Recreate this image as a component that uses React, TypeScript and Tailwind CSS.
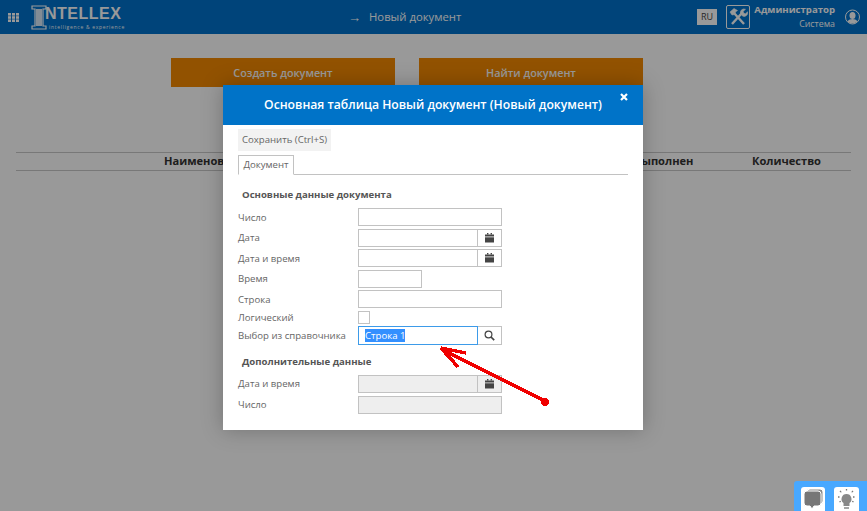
const font = "font-['Open_Sans',sans-serif]";

function Logo() {
  return (
    <div className="flex items-center relative w-[92px] h-[26px]">
      <svg width="16" height="25" viewBox="0 0 16 25" className="shrink-0">
        <path d="M1 1h14v3h-3v17h3v3H1v-3h3V4H1z" fill="none" stroke="#fff" strokeWidth="1.2" />
        <rect x="5" y="4" width="6" height="17" fill="#fff" opacity="0.85" />
      </svg>
      <span className="font-['Liberation_Sans',sans-serif] font-bold text-[16px] leading-none tracking-[0.5px] -ml-[2px] -mt-[6px] text-white">NTELLEX</span>
      <span className="absolute left-[18px] top-[21px] text-white text-[5px] leading-none tracking-[0.7px] whitespace-nowrap">intelligence &amp; experience</span>
    </div>
  );
}

function GridIcon() {
  return (
    <svg width="11" height="9" viewBox="0 0 11 9" fill="#fff">
      {[0, 3.2, 6.4].map((y) =>
        [0, 4, 8].map((x) => <rect key={`${x}-${y}`} x={x} y={y} width="3" height="2.6" />)
      )}
    </svg>
  );
}

function ToolsIcon() {
  return (
    <svg width="20" height="20" viewBox="0 0 20 20" fill="none" stroke="#fff">
      <path d="M4 17 L14 6" strokeWidth="2.4" />
      <path d="M12.5 6.5a3.6 3.6 0 0 1 5-4.2l-2.4 2.2 0.7 1.8 1.8 0.4 1.9-1.9a3.6 3.6 0 0 1-5 4.3z" fill="#fff" strokeWidth="0.6" />
      <path d="M16 17 L6 6" strokeWidth="2.4" />
      <path d="M2 5 L6 1.5 L9.5 3.5 L7.5 5 L6.5 7.5 L4 8z" fill="#fff" strokeWidth="0.6" />
    </svg>
  );
}

function UserIcon() {
  return (
    <svg width="15" height="16" viewBox="0 0 15 16">
      <circle cx="7.5" cy="8" r="7" fill="none" stroke="#fff" strokeWidth="1" />
      <ellipse cx="7.5" cy="6.5" rx="3" ry="3.6" fill="#fff" />
      <path d="M2.6 12.5c1-2 3-2.6 4.9-2.6s3.9.6 4.9 2.6a7 7 0 0 1-9.8 0z" fill="#fff" />
    </svg>
  );
}

function CalIcon() {
  return (
    <svg width="9" height="10" viewBox="0 0 9 10" fill="#444">
      <rect x="2" y="0" width="1.4" height="1.5" />
      <rect x="5.6" y="0" width="1.4" height="1.5" />
      <rect x="0" y="1.5" width="9" height="2" />
      <rect x="0" y="4.3" width="9" height="5.2" />
    </svg>
  );
}

function SearchIcon() {
  return (
    <svg width="11" height="11" viewBox="0 0 11 11" fill="none" stroke="#444">
      <circle cx="4.5" cy="4.5" r="3.4" strokeWidth="1.2" />
      <path d="M7 7 L10.2 10.2" strokeWidth="1.7" />
    </svg>
  );
}

function Field({ w = "w-[144px]", icon, disabled, focused, value }: { w?: string; icon?: "cal" | "search"; disabled?: boolean; focused?: boolean; value?: string }) {
  const bg = disabled ? "bg-[#eeeeee]" : "bg-white";
  return (
    <div className={`flex ${w} h-full`}>
      <div className={`flex-1 min-w-0 flex items-center border ${focused ? "border-[#3d9be9]" : "border-[#c2c2c2]"} ${bg} px-[6px]`}>
        {value && <span className="bg-[#3390ff] text-white text-[9.6px] leading-[13px]">{value}</span>}
      </div>
      {icon && (
        <div className={`w-[24px] flex items-center justify-center border border-l-0 border-[#c2c2c2] ${bg}`}>
          {icon === "cal" ? <CalIcon /> : <SearchIcon />}
        </div>
      )}
    </div>
  );
}

function Row({ label, h = "h-[18px]", mb = "mb-[2.5px]", children }: { label: string; h?: string; mb?: string; children: React.ReactNode }) {
  return (
    <div className={`flex items-center ${h} ${mb}`}>
      <label className="w-[120px] shrink-0 pt-[1px] text-[9.6px] text-[#666] leading-none whitespace-nowrap">{label}</label>
      {children}
    </div>
  );
}

export default function App() {
  return (
    <div className={`${font} relative w-[867px] h-[511px] overflow-hidden bg-white`}>
      <header className="h-[34px] bg-[#0072cc] flex items-center text-white">
        <span className="ml-[8px] flex"><GridIcon /></span>
        <div className="ml-[12px]"><Logo /></div>
        <div className="ml-[225px] flex items-center gap-[8px] text-[11.3px]">
          <span className="text-[13px] leading-none">→</span>
          <span>Новый документ</span>
        </div>
        <div className="ml-auto flex items-center">
          <span className="w-[20px] h-[16px] bg-white text-[#444] text-[9px] flex items-center justify-center">RU</span>
          <span className="ml-[9px] w-[24px] h-[24px] border border-white rounded-[2px] flex items-center justify-center">
            <ToolsIcon />
          </span>
          <div className="ml-[4px] w-[81px] text-right leading-[14px]">
            <div className="text-[9.6px] font-bold whitespace-nowrap">Администратор</div>
            <div className="text-[8.8px]">Система</div>
          </div>
          <span className="ml-[10px] mr-[7px] flex"><UserIcon /></span>
        </div>
      </header>

      <div className="mt-[24px] ml-[171px] flex gap-[24px]">
        <div className="w-[224px] h-[29px] pt-[1px] bg-[#f38900] text-white text-[10.8px] font-semibold flex items-center justify-center">Создать документ</div>
        <div className="w-[224px] h-[29px] pt-[1px] bg-[#f38900] text-white text-[10.8px] font-semibold flex items-center justify-center">Найти документ</div>
      </div>

      <div className="mt-[65px] mx-[16px] h-[19px] border-y border-[#c8c8c8] text-[11.1px] font-bold text-[#333] flex items-center">
        <span className="ml-[148px] w-[470px] shrink-0">Наименование</span>
        <span className="w-[118px] shrink-0">Выполнен</span>
        <span>Количество</span>
      </div>

      <div className="absolute inset-0 bg-black/40" />

      <div className="absolute left-[223px] top-[85px] w-[420px] h-[345px] bg-white shadow-[0_0_20px_rgba(0,0,0,0.25)]">
        <div className="relative h-[40px] pt-[1px] bg-[#0073c8] flex items-center justify-center text-white text-[12.2px] font-semibold">
          Основная таблица Новый документ (Новый документ)
          <svg width="8" height="8" viewBox="0 0 8 8" className="absolute right-[15px] top-[8px]" stroke="#fff" strokeWidth="2.2">
            <path d="M1 1 L7 7 M7 1 L1 7" />
          </svg>
        </div>
        <div className="px-[15px]">
          <div className="mt-[4px] w-[93px] h-[22px] bg-[#f2f2f2] flex items-center justify-center text-[9.6px] text-[#666] whitespace-nowrap">Сохранить (Ctrl+S)</div>
          <div className="mt-[4px] h-[20px] w-[390px] border-b border-[#c2c2c2] flex">
            <div className="w-[56px] h-[20px] border border-b-white border-[#c2c2c2] flex items-center justify-center text-[9.6px] text-[#666]">Документ</div>
          </div>
          <h3 className="mt-[14px] ml-[4px] h-[12px] flex items-center text-[9.6px] font-bold text-[#555]">Основные данные документа</h3>
          <div className="mt-[7px]">
            <Row label="Число"><Field /></Row>
            <Row label="Дата"><Field icon="cal" /></Row>
            <Row label="Дата и время"><Field icon="cal" /></Row>
            <Row label="Время"><Field w="w-[64px]" /></Row>
            <Row label="Строка"><Field /></Row>
            <Row label="Логический" h="h-[13px]" mb="mb-[2px]"><span className="w-[12px] h-[13px] border border-[#c2c2c2]" /></Row>
            <Row label="Выбор из справочника" h="h-[19px]"><Field icon="search" focused value="Строка 1" /></Row>
          </div>
          <h3 className="mt-[12px] ml-[4px] h-[12px] flex items-center text-[9.6px] font-bold text-[#555]">Дополнительные данные</h3>
          <div className="mt-[6px]">
            <Row label="Дата и время" mb="mb-[3px]"><Field icon="cal" disabled /></Row>
            <Row label="Число"><Field disabled /></Row>
          </div>
        </div>
      </div>

      <svg className="absolute left-[435px] top-[343px]" width="120" height="65" viewBox="0 0 120 65" shapeRendering="crispEdges">
        <path d="M108 57 L8 7" stroke="#f00000" strokeWidth="3.5" fill="none" />
        <path d="M6 5 L31 10 M6 5 L23 24" stroke="#f00000" strokeWidth="3.5" fill="none" />
        <circle cx="110" cy="59" r="4" fill="#f00000" />
      </svg>

      <div className="absolute right-0 bottom-0 w-[73px] h-[30px] bg-[#48a8ff] rounded-tl-[3px] flex items-end pl-[7px] gap-[9px]">
        <div className="w-[24px] h-[24px] bg-white rounded-t-[3px] flex items-center justify-center">
          <svg width="21" height="22" viewBox="0 0 21 22">
            <rect x="4" y="1" width="16" height="15" rx="3" fill="#8a8a8a" stroke="#fff" strokeWidth="1" />
            <path d="M4 3h11a3 3 0 0 1 3 3v9a3 3 0 0 1-3 3H11l-2 3-2-3H4a3 3 0 0 1-3-3V6a3 3 0 0 1 3-3z" fill="#777" stroke="#fff" strokeWidth="1" />
          </svg>
        </div>
        <div className="w-[25px] h-[24px] bg-white rounded-t-[3px] flex items-center justify-center">
          <svg width="21" height="22" viewBox="0 0 21 22">
            <path d="M10.5 6a5 5 0 0 1 3 9v3h-6v-3a5 5 0 0 1 3-9z" fill="#888" />
            <path d="M8 20h5" stroke="#888" strokeWidth="1.5" />
            <path d="M10.5 1v2M4 3l1.5 1.5M17 3l-1.5 1.5M2 9h2M17 9h2M3.5 14l1.5-1M17.5 14l-1.5-1" stroke="#777" strokeWidth="1.3" strokeDasharray="1.5 0.5" />
          </svg>
        </div>
      </div>
    </div>
  );
}
